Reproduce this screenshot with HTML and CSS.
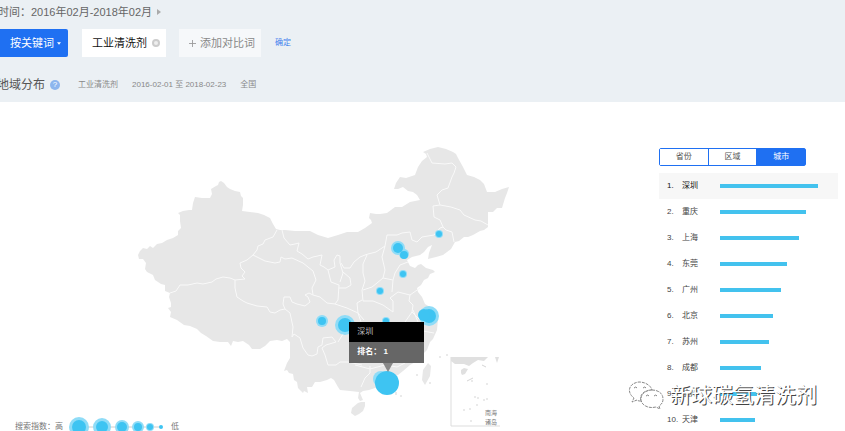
FILE: index.html
```html
<!DOCTYPE html>
<html lang="zh-CN">
<head>
<meta charset="utf-8">
<title>地域分布</title>
<link rel="stylesheet" href="styles.css">
</head>
<body>
<header class="top">
  <div class="period"><span>时间：2016年02月-2018年02月</span><svg class="arrow" viewBox="0 0 4 6"><path d="M0 0 4 3 0 6z"/></svg></div>
  <div class="filters">
    <button class="btn btn-mode" type="button">按关键词<svg class="caret" viewBox="0 0 6 4"><path d="M0 0h6L3 4z"/></svg></button>
    <button class="btn btn-word" type="button">工业清洗剂<svg class="remove" viewBox="0 0 8 8"><circle cx="4" cy="4" r="3"/></svg></button>
    <button class="btn btn-add" type="button"><svg class="plus" viewBox="0 0 8 8"><path d="M4 0v8M0 4h8"/></svg>添加对比词</button>
    <a class="confirm" href="#">确定</a>
  </div>
  <div class="heading">
    <h1>地域分布</h1>
    <span class="help">?</span>
    <span class="meta">工业清洗剂</span>
    <span class="meta">2016-02-01 至 2018-02-23</span>
    <span class="meta">全国</span>
  </div>
</header>
<main class="content">
  <section class="map">
    <svg class="china" viewBox="0 102 659 329">
      <g class="land">
        <path d="M138 255L140 251 143 248 147 249 150 246 153 248 157 244 162 243 167 240 173 238 178 235 178 231 181 228 180 221 180 215 178 213 183 211 189 210 192 210 193 203 195 197 202 198 210 198 212 194 211 189 216 186 218 185 219 182 221 181 224 183 227 187 230 189 235 191 240 192 241 196 243 198 243 205 242 211 250 212 258 213 264 215 270 218 273 224 276 229 280 230 285 230 295 231 303 231 310 231 318 235 328 238 338 235 347 232 358 232 365 228 372 223 371 220 369 218 370 213 376 214 380 214 387 213 395 207 402 207 410 202 420 200 417 195 413 192 408 191 403 187 398 189 394 189 396 183 400 177 406 178 415 175 418 167 422 161 427 157 426 154 423 152 430 149 438 147 446 149 453 152 456 154 458 158 463 167 467 175 474 177 480 180 484 184 487 192 495 192 502 189 509 187 507 193 505 198 502 208 497 208 493 212 488 212 488 220 488 227 484 230 480 231 473 235 468 237 464 237 459 241 455 242 451 249 443 255 436 257 428 259 429 253 432 245 428 247 424 252 420 255 412 257 407 260 410 266 415 268 418 265 421 264 426 268 433 270 435 272 430 274 428 278 424 280 421 285 417 288 418 292 422 297 425 304 430 307 427 309 435 312 434 316 438 319 437 330 433 339 430 342 427 350 423 354 417 361 410 365 403 371 398 375 390 378 382 384 375 388 369 390 363 391 360 393 363 400 360 401 358 398 359 392 350 391 340 390 338 387 334 380 331 378 327 380 320 382 315 382 312 387 307 387 308 393 304 391 303 393 298 388 297 382 294 380 293 374 289 373 287 370 284 371 287 363 290 358 290 350 290 342 287 339 282 341 277 340 270 341 265 346 260 349 252 349 249 345 243 341 238 342 233 341 231 346 228 342 220 342 213 341 206 336 201 333 197 329 190 326 184 325 177 320 170 317 171 312 168 308 171 307 171 303 169 297 170 293 165 291 165 285 161 284 155 280 153 275 147 272 145 269 146 263 143 259 139 259z"/>
        <path d="M358 403L361 402 365 402 365 406 363 411 359 414 355 416 351 413 352 408zM428 363L431 366 430 376 425 385 422 380 423 370z"/>
        <path class="dots" d="M417 374v2M430 382v2M439 357h2M446 355h2M396 392v3M401 395v2"/>
      </g>
      <g class="borders">
        <path d="M277 230L273 237 265 240 263 244 258 246 257 250 253 255 247 260 240 263 241 268 245 272 242 276 245 279 235 280 230 278 223 277 216 279 212 282 203 284 197 283 188 285 180 285 176 291 170 293"/>
        <path d="M235 280L235 288 237 297 243 301 247 303 257 306 267 307 270 312 275 313 280 310 285 309 283 304 284 297 290 297 292 302 297 304 305 306 310 302 308 297 305 295 309 293 313 295 312 288 316 280 313 271 303 263 292 258 285 259 281 257 280 262 275 263 265 261 253 255M285 309L290 313 293 327 292 337"/>
        <path d="M282 230L284 238 290 245 295 244 299 243 297 251 302 254 308 259 313 257 322 255 320 265 324 267 328 270 331 282 339 285 338 300 335 304 327 303 320 297 313 295M328 270L335 267 334 260 337 255 340 256 340 263 343 273 340 282M343 272L350 278 351 285 346 288 339 288M341 263L344 268 350 268 354 262 360 257 365 255 368 254 376 252 385 246 387 235 397 235 402 233 410 232 412 240 417 242 422 237 434 235 440 228 443 227"/>
        <path d="M367 255L363 264 363 273 365 281 362 290 363 301 373 301 383 305 393 312 393 301 390 298 398 292 410 295 420 288M363 290L372 287 377 283 383 278 393 280 392 292M385 246L382 257 385 270 383 278M393 280L395 273 400 265 408 262M410 295L409 301 413 305 412 312 420 320M362 300L357 303 358 313 364 320"/>
        <path d="M427 153L432 163 445 164 452 163 456 167 454 173 452 177 448 188 442 190 437 195 440 205 451 207 460 210 464 215 475 220 481 221 488 225M440 205L433 206 434 217 440 220 443 227 446 230 452 232 454 242"/>
        <path d="M335 304L347 308 358 313 362 325M292 337L294 334 300 338 303 348 308 355 312 356 317 354 318 347 322 345 323 338 332 337 336 342 326 345 322 348 325 355 328 365 336 365 340 362 348 362 362 365M338 342L343 334 350 330M370 366L370 373 365 378 361 387M355 365L370 369 385 365 397 367 405 363M413 310L418 322 423 331 434 333M423 331L419 341 410 345 405 363M412 312L405 322"/>
      </g>
      <g class="inset">
        <path class="frame" d="M451 357v69h49"/>
        <path class="coast" d="M451 357h37l-4 4-6-1-5 3-4 3-5-2-9 0-4-3zM495 357h4l-2 6zM461 370l3-2 4 1-3 5-3 1-1-2z"/>
        <path class="dots" d="M482 365l4 2M473 378l-6 3M471 381h2M486 384h2M478 397v2M484 399v2M487 398v2M464 409v2M470 408v2M471 420v2M477 404v2M475 396v2"/>
        <text x="485" y="415">南海</text>
        <text x="485" y="424">诸岛</text>
      </g>
      <g class="halos">
        <circle cx="398" cy="248" r="7"/><circle cx="404" cy="254" r="5"/><circle cx="439" cy="234" r="4"/><circle cx="403" cy="274" r="4"/><circle cx="380" cy="291" r="4"/><circle cx="322" cy="321" r="6"/><circle cx="345" cy="325" r="10"/><circle cx="386" cy="321" r="4"/><circle cx="429" cy="316" r="10"/><circle cx="381" cy="379" r="8"/>
      </g>
      <g class="cities">
        <circle cx="398" cy="248" r="5"/><circle cx="404" cy="255" r="4"/><circle cx="439" cy="234" r="3"/><circle cx="403" cy="274" r="3"/><circle cx="380" cy="291" r="3"/><circle cx="322" cy="321" r="4"/><circle cx="345" cy="325" r="7"/><circle cx="386" cy="321" r="3"/><circle cx="429" cy="316" r="7"/><circle cx="424" cy="315" r="6"/><circle cx="387" cy="383" r="12"/>
      </g>
    </svg>
    <div class="tooltip"><div class="tip-name">深圳</div><div class="tip-rank">排名： 1</div></div>
    <div class="legend">
      <span>搜索指数：高</span>
      <svg class="scale" viewBox="0 0 96 20"><path d="M10 10h82"/><g class="halos"><circle cx="10" cy="10" r="10"/><circle cx="33" cy="10" r="9"/><circle cx="53" cy="10" r="7"/><circle cx="69" cy="10" r="6"/><circle cx="81" cy="10" r="4"/></g><g class="cities"><circle cx="10" cy="10" r="7"/><circle cx="33" cy="10" r="6"/><circle cx="53" cy="10" r="5"/><circle cx="69" cy="10" r="4"/><circle cx="81" cy="10" r="3"/><circle cx="92" cy="10" r="2"/></g></svg>
      <span>低</span>
    </div>
  </section>
  <aside class="ranking">
    <div class="tabs"><button type="button">省份</button><button type="button">区域</button><button class="active" type="button">城市</button></div>
    <ol class="ranks">
      <li class="current"><span>1.</span><span>深圳</span><i style="width:100%"></i></li>
      <li><span>2.</span><span>重庆</span><i style="width:88%"></i></li>
      <li><span>3.</span><span>上海</span><i style="width:81%"></i></li>
      <li><span>4.</span><span>东莞</span><i style="width:68%"></i></li>
      <li><span>5.</span><span>广州</span><i style="width:62%"></i></li>
      <li><span>6.</span><span>北京</span><i style="width:54%"></i></li>
      <li><span>7.</span><span>苏州</span><i style="width:50%"></i></li>
      <li><span>8.</span><span>成都</span><i style="width:42%"></i></li>
      <li><span>9.</span><span>杭州</span><i style="width:38%"></i></li>
      <li><span>10.</span><span>天津</span><i style="width:36%"></i></li>
    </ol>
    <div class="watermark">
      <svg class="wechat" viewBox="0 0 36 28"><g class="bubbles"><path d="M13 20c-2 0-3 0-4-1l-5 2 2-4C-2 11 1 2 11 1c7 0 12 4 13 8-8 0-13 5-11 11z"/><path d="M24 9c7 0 11 4 11 9 0 3-1 5-4 7l1 3-4-2c-8 2-15-2-15-8 0-5 5-9 11-9z"/></g><path class="eyes" d="M6 7q2-2 3 0M15 7q2-2 3 0M18 15q2-2 3 0M26 15q2-2 3 0"/></svg>
      <span>新球碳氢清洗剂</span>
    </div>
  </aside>
</main>
</body>
</html>
```
FILE: styles.css
```css
* { box-sizing: border-box; }
body {
  margin: 0;
  overflow: hidden;
  background: #fff;
  color: #444;
  font: 8px/12px "Liberation Sans", "Noto Sans CJK SC", sans-serif;
}
button { font: inherit; border: 0; padding: 0; }
svg { display: block; flex: none; }

.top { height: 102px; padding-top: 4px; background: #ebf0f4; }
.period {
  display: flex;
  align-items: center;
  gap: 5px;
  margin-left: -2px;
  color: #666;
  font-size: 11px;
  line-height: 16px;
}
.arrow { width: 4px; height: 6px; fill: #aaa; }
.filters { display: flex; align-items: center; margin-top: 9px; }
.btn {
  display: flex;
  align-items: center;
  justify-content: center;
  height: 28px;
  font-size: 11px;
}
.btn-mode {
  gap: 3px;
  padding: 0 7px 0 10px;
  border-radius: 0 2px 2px 0;
  background: #1f70f2;
  color: #fff;
}
.caret { width: 4px; height: 3px; fill: #fff; }
.btn-word {
  gap: 5px;
  margin-left: 14px;
  padding: 0 6px 0 10px;
  background: #fff;
  color: #111;
}
.remove { width: 8px; height: 8px; fill: #eee; stroke: #ccc; stroke-width: 2px; }
.btn-add {
  gap: 4px;
  margin-left: 13px;
  padding: 0 6px 0 10px;
  background: #f6f8fa;
  color: #888;
}
.plus { width: 7px; height: 7px; stroke: #999; }
.confirm { margin-left: 14px; color: #3f7fee; text-decoration: none; }
.heading { display: flex; align-items: center; margin: 20px 0 0 -3px; line-height: 16px; }
.heading h1 { margin: 0; color: #555; font-size: 12px; font-weight: 400; }
.help {
  width: 10px;
  height: 10px;
  margin: 0 4px 0 5px;
  border-radius: 50%;
  background: #8db6ee;
  color: #fff;
  line-height: 10px;
  text-align: center;
}
.meta { margin-left: 14px; color: #888; }

.content {
  display: grid;
  grid-template-columns: minmax(0, 1fr) 179px;
  align-items: start;
  padding-right: 7px;
}
.map { position: relative; }
.china { width: 100%; height: auto; }
.land { fill: #e7e7e7; }
.borders { fill: none; stroke: #f9f9f9; stroke-linejoin: round; }
.dots { fill: none; stroke: #d5d5d5; }
.frame { fill: none; stroke: #ddd; }
.coast { fill: #e0e0e0; }
.inset text { fill: #777; font-size: 6px; }
.halos { fill: #8fdcf7; }
.cities { fill: #3ec4f2; }

.tooltip {
  position: absolute;
  left: 53%;
  top: 67%;
  width: 75px;
  background: #666;
  color: #fff;
  line-height: 20px;
}
.tooltip::after {
  content: "";
  position: absolute;
  top: 100%;
  left: 50%;
  margin-left: -4px;
  border: 5px solid transparent;
  border-top: 9px solid #888;
  border-bottom: 0;
}
.tip-name { padding-left: 8px; background: #000; color: #bbb; }
.tip-rank { padding: 0 8px 1px; font-weight: 700; }

.legend {
  position: absolute;
  left: 15px;
  bottom: -6px;
  display: flex;
  align-items: center;
  gap: 6px;
  color: #777;
}
.scale { width: 96px; height: 20px; }
.scale > path { stroke: #ccc; }

.ranking { position: relative; padding-top: 46px; }
.tabs {
  display: flex;
  width: 147px;
  height: 18px;
  border: 1px solid #1f70f2;
  border-radius: 2px;
}
.tabs button { flex: 1; background: #fff; color: #555; }
.tabs button + button { border-left: 1px solid #1f70f2; }
.tabs .active { background: #1f70f2; color: #fff; }
.ranks { margin: 7px 0 0; padding: 0; list-style: none; }
.ranks li {
  display: grid;
  grid-template-columns: 15px 38px 1fr;
  align-items: center;
  height: 26px;
  padding: 0 20px 0 8px;
}
.ranks .current { background: #f7f7f7; color: #111; }
.ranks i { height: 4px; background: #43c2ee; }

.watermark {
  position: absolute;
  right: 21px;
  bottom: 23px;
  display: flex;
  align-items: center;
  gap: 6px;
  color: #fff;
  font-size: 21px;
  line-height: 30px;
  white-space: nowrap;
  text-shadow: 1px 1px 0 #444;
}
.wechat { width: 36px; height: 28px; }
.bubbles { fill: #fff; stroke: #888; stroke-dasharray: 3 1; }
.eyes { fill: none; stroke: #888; }
```
